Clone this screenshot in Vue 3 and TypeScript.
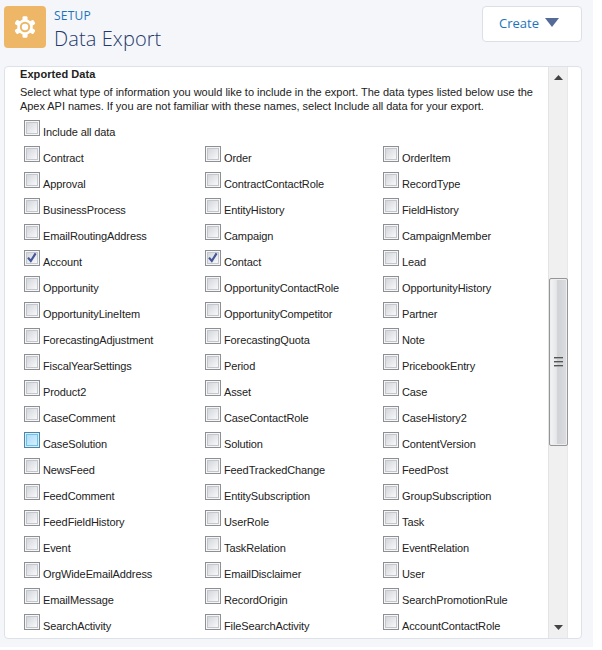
<script setup lang="ts">
import { ref } from 'vue'

interface DataType {
  name: string
  checked?: boolean
  hovered?: boolean
}

const rows = ref<DataType[][]>([
  [{ name: 'Contract' }, { name: 'Order' }, { name: 'OrderItem' }],
  [{ name: 'Approval' }, { name: 'ContractContactRole' }, { name: 'RecordType' }],
  [{ name: 'BusinessProcess' }, { name: 'EntityHistory' }, { name: 'FieldHistory' }],
  [{ name: 'EmailRoutingAddress' }, { name: 'Campaign' }, { name: 'CampaignMember' }],
  [{ name: 'Account', checked: true }, { name: 'Contact', checked: true }, { name: 'Lead' }],
  [{ name: 'Opportunity' }, { name: 'OpportunityContactRole' }, { name: 'OpportunityHistory' }],
  [{ name: 'OpportunityLineItem' }, { name: 'OpportunityCompetitor' }, { name: 'Partner' }],
  [{ name: 'ForecastingAdjustment' }, { name: 'ForecastingQuota' }, { name: 'Note' }],
  [{ name: 'FiscalYearSettings' }, { name: 'Period' }, { name: 'PricebookEntry' }],
  [{ name: 'Product2' }, { name: 'Asset' }, { name: 'Case' }],
  [{ name: 'CaseComment' }, { name: 'CaseContactRole' }, { name: 'CaseHistory2' }],
  [{ name: 'CaseSolution', hovered: true }, { name: 'Solution' }, { name: 'ContentVersion' }],
  [{ name: 'NewsFeed' }, { name: 'FeedTrackedChange' }, { name: 'FeedPost' }],
  [{ name: 'FeedComment' }, { name: 'EntitySubscription' }, { name: 'GroupSubscription' }],
  [{ name: 'FeedFieldHistory' }, { name: 'UserRole' }, { name: 'Task' }],
  [{ name: 'Event' }, { name: 'TaskRelation' }, { name: 'EventRelation' }],
  [{ name: 'OrgWideEmailAddress' }, { name: 'EmailDisclaimer' }, { name: 'User' }],
  [{ name: 'EmailMessage' }, { name: 'RecordOrigin' }, { name: 'SearchPromotionRule' }],
  [{ name: 'SearchActivity' }, { name: 'FileSearchActivity' }, { name: 'AccountContactRole' }],
])

const includeAll = ref(false)

function toggle(item: DataType): void {
  item.checked = !item.checked
}
</script>

<template>
  <main class="page">
    <header class="header">
      <div class="badge">
        <svg width="24" height="24" viewBox="-12 -12 24 24">
          <g fill="#fff">
            <rect v-for="a in [0, 60, 120]" :key="a" x="-2.5" y="-10.8" width="5" height="21.6" rx="1.4" :transform="`rotate(${a})`" />
            <circle r="7.8" />
          </g>
          <circle r="5.2" fill="#edb767" />
          <circle r="3.2" fill="#fff" />
        </svg>
      </div>
      <div class="titles">
        <div class="setup">SETUP</div>
        <h1 class="title">Data Export</h1>
      </div>
      <button class="create" type="button">
        <span>Create</span>
        <svg width="14" height="9" viewBox="0 0 14 9"><path d="M0 0H14L7 9Z" fill="#536b96" /></svg>
      </button>
    </header>

    <section class="card">
      <div class="content">
        <h2 class="heading">Exported Data</h2>
        <p class="intro">
          <span class="line one">Select what type of information you would like to include in the export. The data types listed below use the</span>
          <span class="line two">Apex API names. If you are not familiar with these names, select Include all data for your export.</span>
        </p>
        <div class="grid">
          <div class="item all" @click="includeAll = !includeAll">
            <span class="box">
              <svg v-if="includeAll" width="12" height="12" viewBox="0 0 12 12"><path d="M2 5.6L4.8 9L9.6 1.4" /></svg>
            </span>
            <span class="label">Include all data</span>
          </div>
          <template v-for="(row, r) in rows" :key="r">
            <div v-for="item in row" :key="item.name" class="item" @click="toggle(item)">
              <span class="box" :class="{ hovered: item.hovered }">
                <svg v-if="item.checked" width="12" height="12" viewBox="0 0 12 12"><path d="M2 5.6L4.8 9L9.6 1.4" /></svg>
              </span>
              <span class="label">{{ item.name }}</span>
            </div>
          </template>
        </div>
      </div>
      <div class="scrollbar">
        <svg class="up" width="9" height="5" viewBox="0 0 9 5"><path d="M4.5 0L9 5H0Z" fill="#444" /></svg>
        <div class="thumb"><i /><i /><i /></div>
        <svg class="down" width="9" height="5" viewBox="0 0 9 5"><path d="M0 0H9L4.5 5Z" fill="#444" /></svg>
      </div>
    </section>
  </main>
</template>

<style>
body {
  background: #fff;
}
</style>

<style scoped>
* {
  box-sizing: border-box;
}
.page {
  width: 593px;
  height: 647px;
  padding: 6px 11px 0 4px;
  background: #f4f6fa;
  font-family: "Liberation Sans", Arial, sans-serif;
}
.header {
  display: flex;
  align-items: flex-start;
  height: 60px;
}
.badge {
  display: flex;
  align-items: center;
  justify-content: center;
  width: 42px;
  height: 42px;
  border-radius: 4px;
  background: #edb767;
}
.titles {
  margin-left: 8px;
}
.setup {
  margin-top: 1px;
  font-family: "Open Sans", sans-serif;
  font-size: 12px;
  line-height: 18px;
  letter-spacing: 0.25px;
  color: #1b74bb;
}
.title {
  margin: 1px 0 0;
  font-family: "Open Sans", sans-serif;
  font-size: 20px;
  font-weight: 300;
  line-height: 26px;
  letter-spacing: 0.1px;
  color: #24386b;
}
.create {
  display: flex;
  align-items: center;
  gap: 6px;
  width: 100px;
  height: 36px;
  margin-left: auto;
  padding: 0 0 2px 16px;
  border: 1px solid #dcdfe7;
  border-radius: 4px;
  background: #fff;
  font-family: "Open Sans", sans-serif;
  font-size: 13px;
  color: #1b74bb;
}
.create svg {
  margin-bottom: 2px;
}
.card {
  display: flex;
  width: 578px;
  height: 573px;
  border: 1px solid #dde1e9;
  border-radius: 4px;
  background: #fff;
  overflow: hidden;
}
.content {
  width: 543px;
  padding-left: 15px;
  color: #222;
}
.heading {
  margin: 0;
  font-size: 11px;
  line-height: 14px;
  letter-spacing: 0.07px;
}
.intro {
  margin: 4px 0 0;
  font-size: 11px;
  line-height: 14px;
}
.line {
  display: block;
  white-space: nowrap;
}
.one {
  letter-spacing: -0.016px;
}
.two {
  letter-spacing: -0.04px;
}
.grid {
  display: grid;
  grid-template-columns: 181px 178px 1fr;
  grid-auto-rows: 26px;
  margin: 7px 0 0 4px;
}
.item {
  display: flex;
  gap: 3px;
}
.all {
  grid-column: 1 / -1;
}
.box {
  width: 16px;
  height: 16px;
  border: 1px solid #8c8f94;
  padding: 1px;
  background: linear-gradient(135deg, #cbcfd6, #f6f6f7 80%);
  box-shadow: inset 0 0 0 1px #f6f6f6, inset 0 0 0 2px #c3c6cb;
}
.box svg {
  display: block;
  fill: none;
  stroke: #42569a;
  stroke-width: 2.2;
}
.box.hovered {
  border-color: #4b86a8;
  background: linear-gradient(135deg, #a5d8f6, #dcf3fe);
  box-shadow: inset 0 0 0 1px #d4effc, inset 0 0 0 2px #78bfe5;
}
.label {
  padding-top: 5px;
  font-size: 11px;
  line-height: 14px;
  letter-spacing: -0.11px;
  white-space: nowrap;
}
.scrollbar {
  display: flex;
  flex-direction: column;
  align-items: center;
  width: 20px;
  border-left: 1px solid #e4e4e5;
  border-right: 1px solid #e8e8e9;
  background: #f0f0f0;
}
.up {
  margin-top: 8px;
}
.thumb {
  display: flex;
  flex-direction: column;
  align-items: center;
  justify-content: center;
  gap: 2px;
  width: 19px;
  height: 168px;
  margin-top: 198px;
  border: 1px solid #949597;
  border-radius: 2px;
  background: linear-gradient(90deg, #f5f5f6, #e5e6e8 38%, #d0d2d5 45%, #dcdde0);
  box-shadow: inset 0 0 0 1px #eeeef0;
}
.thumb i {
  width: 9px;
  height: 2px;
  border-top: 1px solid #555;
  border-bottom: 1px solid #aaa;
}
.down {
  margin-top: auto;
  margin-bottom: 8px;
}
</style>
